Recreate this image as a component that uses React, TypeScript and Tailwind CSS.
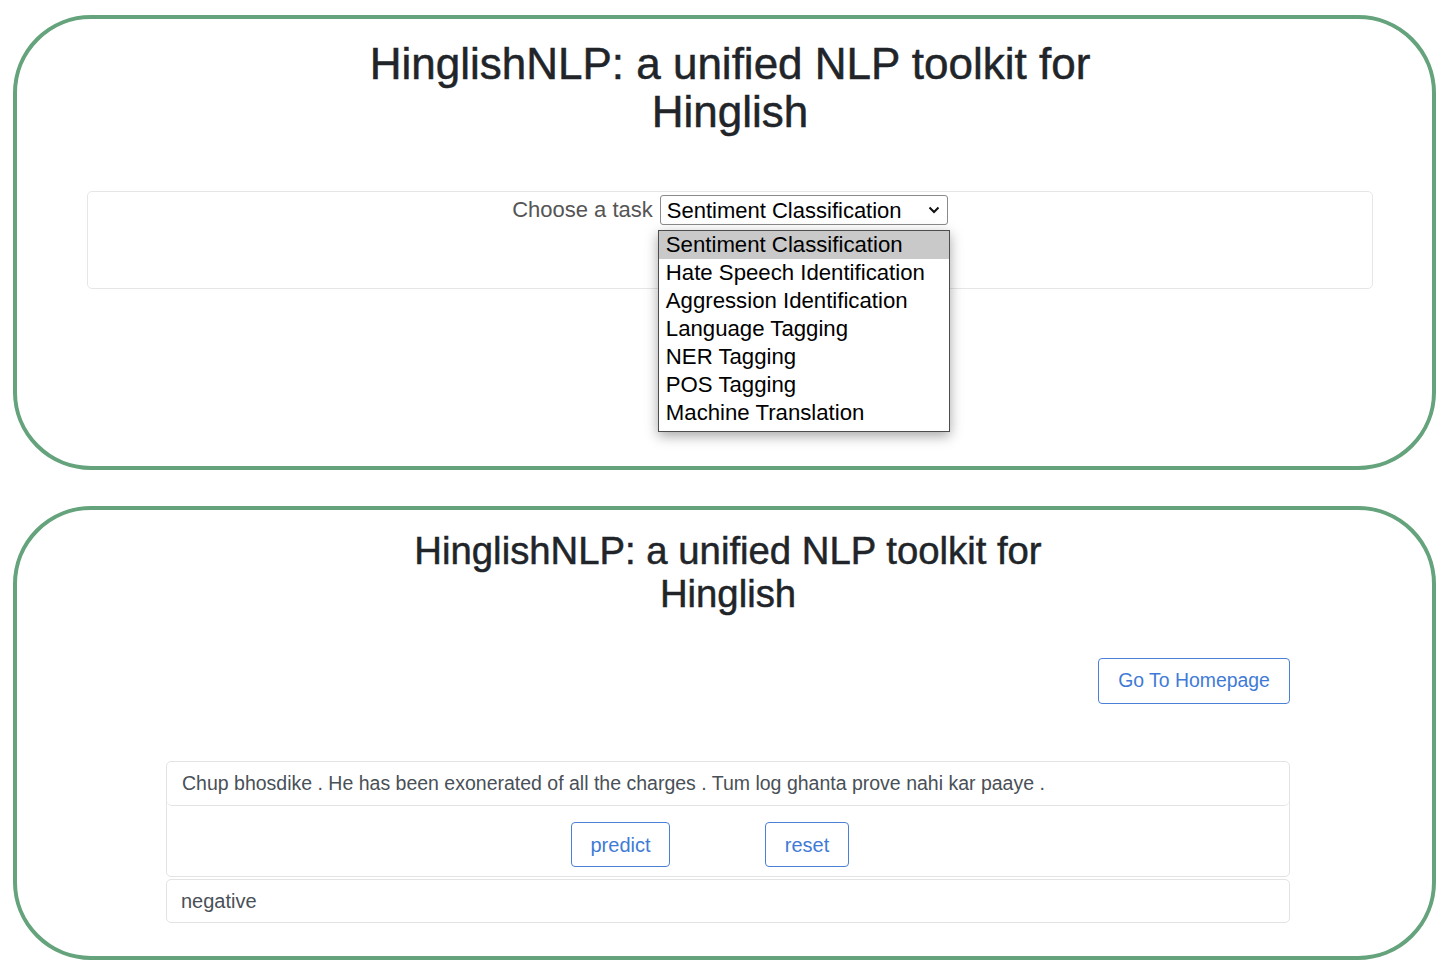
import React from 'react';

const tasks = [
  'Sentiment Classification',
  'Hate Speech Identification',
  'Aggression Identification',
  'Language Tagging',
  'NER Tagging',
  'POS Tagging',
  'Machine Translation',
];

const font = "font-['Liberation_Sans',Arial,sans-serif]";

function Title({ big }: { big: boolean }) {
  return (
    <h1
      className={`text-center text-[#212529] [-webkit-text-stroke:0.5px_#212529] ${
        big ? 'pl-[11px] text-[44px] leading-[48px]' : 'pl-[7px] text-[38.3px] leading-[43px]'
      }`}
    >
      HinglishNLP: a unified NLP toolkit for
      <br />
      Hinglish
    </h1>
  );
}

function TaskPicker() {
  return (
    <div className="ml-[70px] mr-[59px] mt-[55px] h-[98px] rounded-[5px] border border-[#e6e6e6] pt-[3px]">
      <div className="flex items-start justify-center gap-[7px]">
        <span className="mt-[2px] text-[22px] leading-[26px] text-[#555]">Choose a task</span>
        <div className="relative">
          <div className="flex h-[30px] w-[288px] items-center justify-between rounded-[3px] border border-[#8a8a8a] pl-[6px] pr-[7px] text-[22px] text-black">
            <span>Sentiment Classification</span>
            <svg width="12" height="8" viewBox="0 0 12 8">
              <polyline points="1.5,1.5 6,6 10.5,1.5" fill="none" stroke="#111" strokeWidth="2" />
            </svg>
          </div>

          {/* open option list */}
          <div className="absolute left-[-2px] top-[35px] z-10 w-[292px] border-[1.5px] border-[#4d4d4d] bg-white pb-[4px] shadow-[0_4px_12px_rgba(0,0,0,0.35)]">
            {tasks.map((t, i) => (
              <div
                key={t}
                className={`h-[28px] pl-[7px] text-[22.2px] leading-[28px] text-black ${i === 0 ? 'bg-[#c9c9c9]' : ''}`}
              >
                {t}
              </div>
            ))}
          </div>
        </div>
      </div>
    </div>
  );
}

function Predictor() {
  return (
    <div className="ml-[149px] mr-[142px]">
      <div className="mt-[43px] flex justify-end">
        <button className="h-[46px] w-[192px] rounded-[4px] border border-[#4a80d6] text-[19.4px] text-[#3f7bd6]">
          Go To Homepage
        </button>
      </div>

      <div className="mt-[57px] rounded-[5px] border border-[#e3e3e3]">
        <div className="flex h-[44px] items-center rounded-[5px] border-b border-[#e3e3e3] pl-[15px] text-[19.5px] text-[#495057]">
          Chup bhosdike . He has been exonerated of all the charges . Tum log ghanta prove nahi kar paaye .
        </div>
        <div className="flex h-[70px] gap-[95px] pl-[404px] pt-[16px]">
          <button className="h-[45px] w-[99px] rounded-[4px] border border-[#4a80d6] text-[20px] text-[#3f7bd6]">
            predict
          </button>
          <button className="h-[45px] w-[84px] rounded-[4px] border border-[#4a80d6] text-[20px] text-[#3f7bd6]">
            reset
          </button>
        </div>
      </div>

      <div className="mt-[2px] flex h-[44px] items-center rounded-[5px] border border-[#e3e3e3] pl-[14px] text-[20px] text-[#495057]">
        negative
      </div>
    </div>
  );
}

export default function App() {
  return (
    <div className={`min-h-screen bg-white pt-[15px] ${font}`}>
      <div className="ml-[13px] h-[455px] w-[1423px] rounded-[78px] border-[4px] border-[#64a37b] pt-[21px]">
        <Title big />
        <TaskPicker />
      </div>

      <div className="ml-[13px] mt-[36px] h-[454px] w-[1423px] rounded-[78px] border-[4px] border-[#64a37b] pt-[19px]">
        <Title big={false} />
        <Predictor />
      </div>
    </div>
  );
}
